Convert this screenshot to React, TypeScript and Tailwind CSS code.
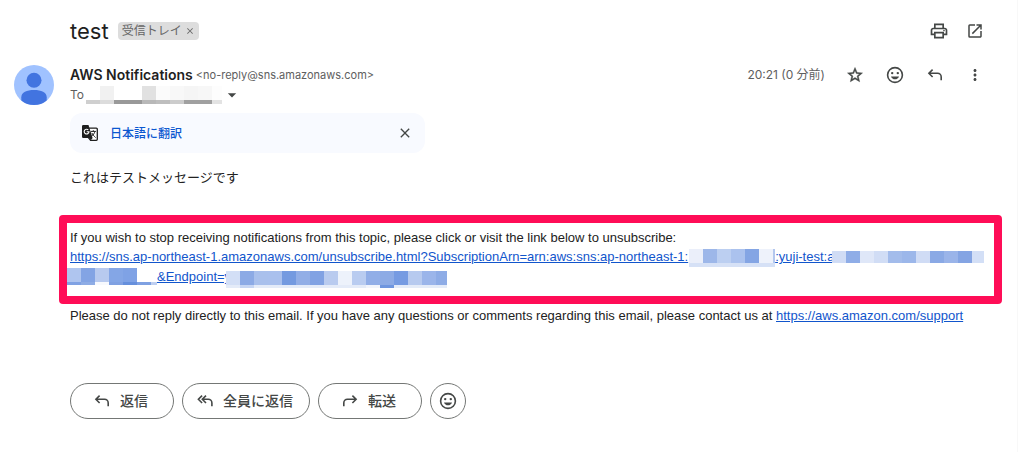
import React from 'react';
import {
  MdArrowDropDown,
  MdClose,
  MdMoreVert,
  MdOpenInNew,
  MdOutlinePrint,
  MdStarOutline,
} from 'react-icons/md';

interface MosaicProps {
  cells: string[];
  strip?: string[];
  cellsClass: string;
  stripClass?: string;
  className: string;
}

// Pixelated cover for private values
const Mosaic: React.FC<MosaicProps> = ({ cells, strip = [], cellsClass, stripClass = '', className }) => (
  <span aria-hidden="true" className={`relative inline-flex flex-col overflow-hidden align-top ${className}`}>
    <span className={`flex ${cellsClass}`}>
      {cells.map((color, i) => (
        <span key={i} className="w-[14px] shrink-0" style={{ backgroundColor: color }} />
      ))}
    </span>
    {strip.length > 0 && (
      <span className={`flex ${stripClass}`}>
        {strip.map((color, i) => (
          <span key={i} className="w-[14px] shrink-0" style={{ backgroundColor: color }} />
        ))}
      </span>
    )}
  </span>
);

const recipient = {
  cells: ['#ffffff', '#f1f1f1', '#ffffff', '#ffffff', '#e1e1e1', '#fbfbfb', '#f8f8f8', '#f5f5f5', '#f7f7f7', '#fdfdfd'],
  strip: ['#cfcfcf', '#dcdcdc', '#999999', '#999999', '#b8b8b8', '#bebebe', '#cccccc', '#a0a0a0', '#a0a0a0', '#e3e3e3'],
};

const account = {
  cells: ['#ebeffa', '#9db7e9', '#bccff1', '#abc2ee', '#84a5e4', '#eef2fb', '#b3c7ee'],
  strip: Array(7).fill('#d6e1f6'),
};

const subscription = {
  cells: ['#d0dcf5', '#8fade7', '#dfe7f8', '#d1ddf5', '#a3bceb', '#9cb7ea', '#d0dcf5', '#8aa9e5', '#9ab4e9', '#84a4e3', '#d3dff6'],
};

const subscriptionEnd = {
  cells: ['#afc5ef', '#83a4e4', '#b8caef', '#84a6e6', '#7fa2e5', '#ffffff', '#ffffff'],
  strip: ['#80a2e3', '#8eace5', '#f7f9fd', '#80a1e2', '#668fdc', '#7fa1e2', '#bfcff0'],
};

const endpoint = {
  cells: [
    '#d3dff6', '#8caae5', '#a9c0ec', '#a9c0ed', '#749ae0', '#92aee6', '#81a2e3', '#b9cbef',
    '#edf2fb', '#b9ccf0', '#91aee7', '#8dabe5', '#769be2', '#b7caef', '#9bb5ea', '#8eace6',
  ],
  strip: [
    '#e4ebf8', '#c6d5f3', '#e4ebf8', '#e4ebf8', '#e4ebf8', '#e4ebf8', '#e4ebf8', '#e4ebf8',
    '#e4ebf8', '#e4ebf8', '#f1f4fb', '#6f96df', '#e4ebf8', '#e4ebf8', '#e4ebf8', '#e4ebf8',
  ],
};

const ReplyIcon = ({ className = '' }: { className?: string }) => (
  <svg viewBox="0 0 20 20" className={`h-5 w-5 ${className}`} fill="none" stroke="currentColor" strokeWidth="1.6" aria-hidden="true">
    <path d="M7.6 4.6 3.9 8.3l3.7 3.7M4 8.3h8.6a3.6 3.6 0 0 1 3.6 3.6v3.3" />
  </svg>
);

const ReplyAllIcon = () => (
  <svg viewBox="0 0 20 20" className="h-5 w-5" fill="none" stroke="currentColor" strokeWidth="1.6" aria-hidden="true">
    <path d="M7.1 4.6 3.4 8.3l3.7 3.7M11 4.6 7.3 8.3 11 12M7.5 8.3h5.8a3.6 3.6 0 0 1 3.6 3.6v3.3" />
  </svg>
);

const SmileIcon = () => (
  <svg viewBox="0 0 20 20" className="h-5 w-5" fill="currentColor" aria-hidden="true">
    <circle cx="10" cy="10" r="7.4" fill="none" stroke="currentColor" strokeWidth="1.6" />
    <circle cx="7.2" cy="8.1" r="1.2" />
    <circle cx="12.8" cy="8.1" r="1.2" />
    <path d="M6 11.4h8c-.6 1.8-2.2 2.9-4 2.9s-3.4-1.1-4-2.9Z" />
  </svg>
);

const TranslateIcon = () => (
  <svg viewBox="0 0 16 16" className="h-4 w-4" fill="none" aria-hidden="true">
    <path d="M6.5 3.2h7.8a1 1 0 0 1 1 1v10.1a1 1 0 0 1-1 1H8.6L6 12" fill="#ffffff" stroke="#1f1f1f" strokeWidth="1.3" />
    <path d="M1.3 0h5.2l1 3.2L10.6 13H1.3A1.3 1.3 0 0 1 0 11.7V1.3A1.3 1.3 0 0 1 1.3 0Z" fill="#1f1f1f" />
    <path d="M6.3 4.9A2.4 2.4 0 1 0 7 6.7H4.7" stroke="#ffffff" strokeWidth="1.1" />
    <path d="M8.7 6.4h5.2M11.3 5.2v1.2M12.9 6.5c-.4 1.8-1.6 3.3-3.1 4.4M9.8 7.9c.8 1.6 2 3 3.8 4.7" stroke="#1f1f1f" strokeWidth="1" />
    <path d="m10.6 13-2 2.4L7.8 13Z" fill="#1f1f1f" />
  </svg>
);

const iconButton = 'flex h-5 w-5 items-center justify-center';
const pillButton =
  'flex h-9 items-center justify-center gap-2 rounded-full border border-[#747775] pr-1 text-sm font-medium text-[#444746]';
const link = 'text-[#1155cc] underline';

export default function App() {
  return (
    <main className="min-h-screen border-r border-[#f8f8f8] bg-white pr-8 pl-[14px] font-['Inter','Noto_Sans_CJK_JP',sans-serif] text-[#1f1f1f]">
      {/* Subject */}
      <header className="flex items-center justify-between pt-4 pl-14">
        <div className="flex items-center gap-[9px]">
          <h1 className="text-[22px] leading-[30px]">test</h1>
          <div className="flex h-[18px] items-center gap-[3px] rounded bg-[#dddddd] px-1 text-xs text-[#666666]">
            <span>受信トレイ</span>
            <button type="button" aria-label="ラベルを削除">
              <MdClose size={10} />
            </button>
          </div>
        </div>
        <div className="flex gap-4 text-[#444746]">
          <button type="button" aria-label="印刷" className={iconButton}>
            <MdOutlinePrint size={20} />
          </button>
          <button type="button" aria-label="新しいウィンドウで開く" className={iconButton}>
            <MdOpenInNew size={18} />
          </button>
        </div>
      </header>

      {/* Sender */}
      <section className="flex items-start gap-4 pt-[19px]">
        <svg viewBox="0 0 40 40" className="h-10 w-10 shrink-0" aria-hidden="true">
          <circle cx="20" cy="20" r="20" fill="#a0c2ff" />
          <circle cx="20" cy="15.3" r="7.5" fill="#4274e0" />
          <path d="M7.3 35.4v-3.2c0-4.8 5.5-7.2 12.7-7.2s12.7 2.4 12.7 7.2v3.2A20 20 0 0 1 20 40a20 20 0 0 1-12.7-4.6Z" fill="#4274e0" />
        </svg>
        <div className="flex-1">
          <div className="flex h-5 items-center justify-between">
            <div className="flex items-center gap-[3px]">
              <h2 className="text-sm font-semibold">AWS Notifications</h2>
              <span className="text-[11px] text-[#5e5e5e]">&lt;no-reply@sns.amazonaws.com&gt;</span>
            </div>
            <div className="flex items-center gap-5 text-[#444746]">
              <span className="text-xs text-[#5e5e5e]">20:21 (0 分前)</span>
              <button type="button" aria-label="スター" className={iconButton}>
                <MdStarOutline size={18} stroke="currentColor" strokeWidth={0.6} />
              </button>
              <button type="button" aria-label="リアクションを追加" className={iconButton}>
                <SmileIcon />
              </button>
              <button type="button" aria-label="返信" className={iconButton}>
                <ReplyIcon />
              </button>
              <button type="button" aria-label="その他" className={iconButton}>
                <MdMoreVert size={18} />
              </button>
            </div>
          </div>
          <div className="flex h-5 items-center text-xs text-[#5e5e5e]">
            <span>To</span>
            <Mosaic {...recipient} cellsClass="h-[14px]" stripClass="h-1" className="ml-[2px] w-[136px]" />
            <button type="button" aria-label="詳細を表示" className="text-[#444746]">
              <MdArrowDropDown size={20} />
            </button>
          </div>
        </div>
      </section>

      <div className="pl-14">
        {/* Translate bar */}
        <div className="mt-2 flex h-10 max-w-[355px] items-center justify-between rounded-xl bg-[#f8faff] px-3">
          <div className="flex items-center gap-3">
            <TranslateIcon />
            <button type="button" className="pt-[2px] text-xs font-medium text-[#0b57d0]">
              日本語に翻訳
            </button>
          </div>
          <button type="button" aria-label="閉じる" className="text-[#444746]">
            <MdClose size={16} />
          </button>
        </div>

        {/* Message body */}
        <article className="-mr-[17px] pt-[15px] font-['Liberation_Sans','Noto_Sans_CJK_JP',sans-serif] text-[13px] leading-5 text-[#222222]">
          <p>これはテストメッセージです</p>
          <div className="mt-[27px] -ml-[11px] rounded border-8 border-[#ff0d57] px-[3px] pt-[5px] pb-[9px]">
            <p className="leading-[19px]">
              If you wish to stop receiving notifications from this topic, please click or visit the link below to unsubscribe:
            </p>
            <p className="whitespace-nowrap">
              <a href="#unsubscribe" className={link}>
                https://sns.ap-northeast-1.amazonaws.com/unsubscribe.html?SubscriptionArn=arn:aws:sns:ap-northeast-1:
                <Mosaic {...account} cellsClass="h-[14px]" stripClass="h-1" className="mt-[2px] ml-px w-[86px]" />
                :yuji-test:a
                <Mosaic {...subscription} cellsClass="h-3" className="mt-1 -ml-[2px] w-[152px]" />
                <br />
                <Mosaic {...subscriptionEnd} cellsClass="h-[14px]" stripClass="h-[3px]" className="mt-px -ml-[3px] w-[90px]" />
                &amp;Endpoint=y
                <Mosaic {...endpoint} cellsClass="h-[14px]" stripClass="h-[3px]" className="mt-1 -mb-1 -ml-[5px] w-[221px]" />
              </a>
            </p>
          </div>
          <p className="mt-[2px]">
            Please do not reply directly to this email. If you have any questions or comments regarding this email, please
            contact us at{' '}
            <a href="https://aws.amazon.com/support" className={link}>
              https://aws.amazon.com/support
            </a>
          </p>
        </article>

        {/* Actions */}
        <div className="mt-[57px] flex gap-2">
          <button type="button" className={`${pillButton} w-[104px]`}>
            <ReplyIcon />
            返信
          </button>
          <button type="button" className={`${pillButton} w-[128px]`}>
            <ReplyAllIcon />
            全員に返信
          </button>
          <button type="button" className={`${pillButton} w-[104px]`}>
            <ReplyIcon className="-scale-x-100" />
            転送
          </button>
          <button
            type="button"
            aria-label="絵文字で返信"
            className="flex h-9 w-9 items-center justify-center rounded-full border border-[#747775] text-[#444746]"
          >
            <SmileIcon />
          </button>
        </div>
      </div>
    </main>
  );
}
